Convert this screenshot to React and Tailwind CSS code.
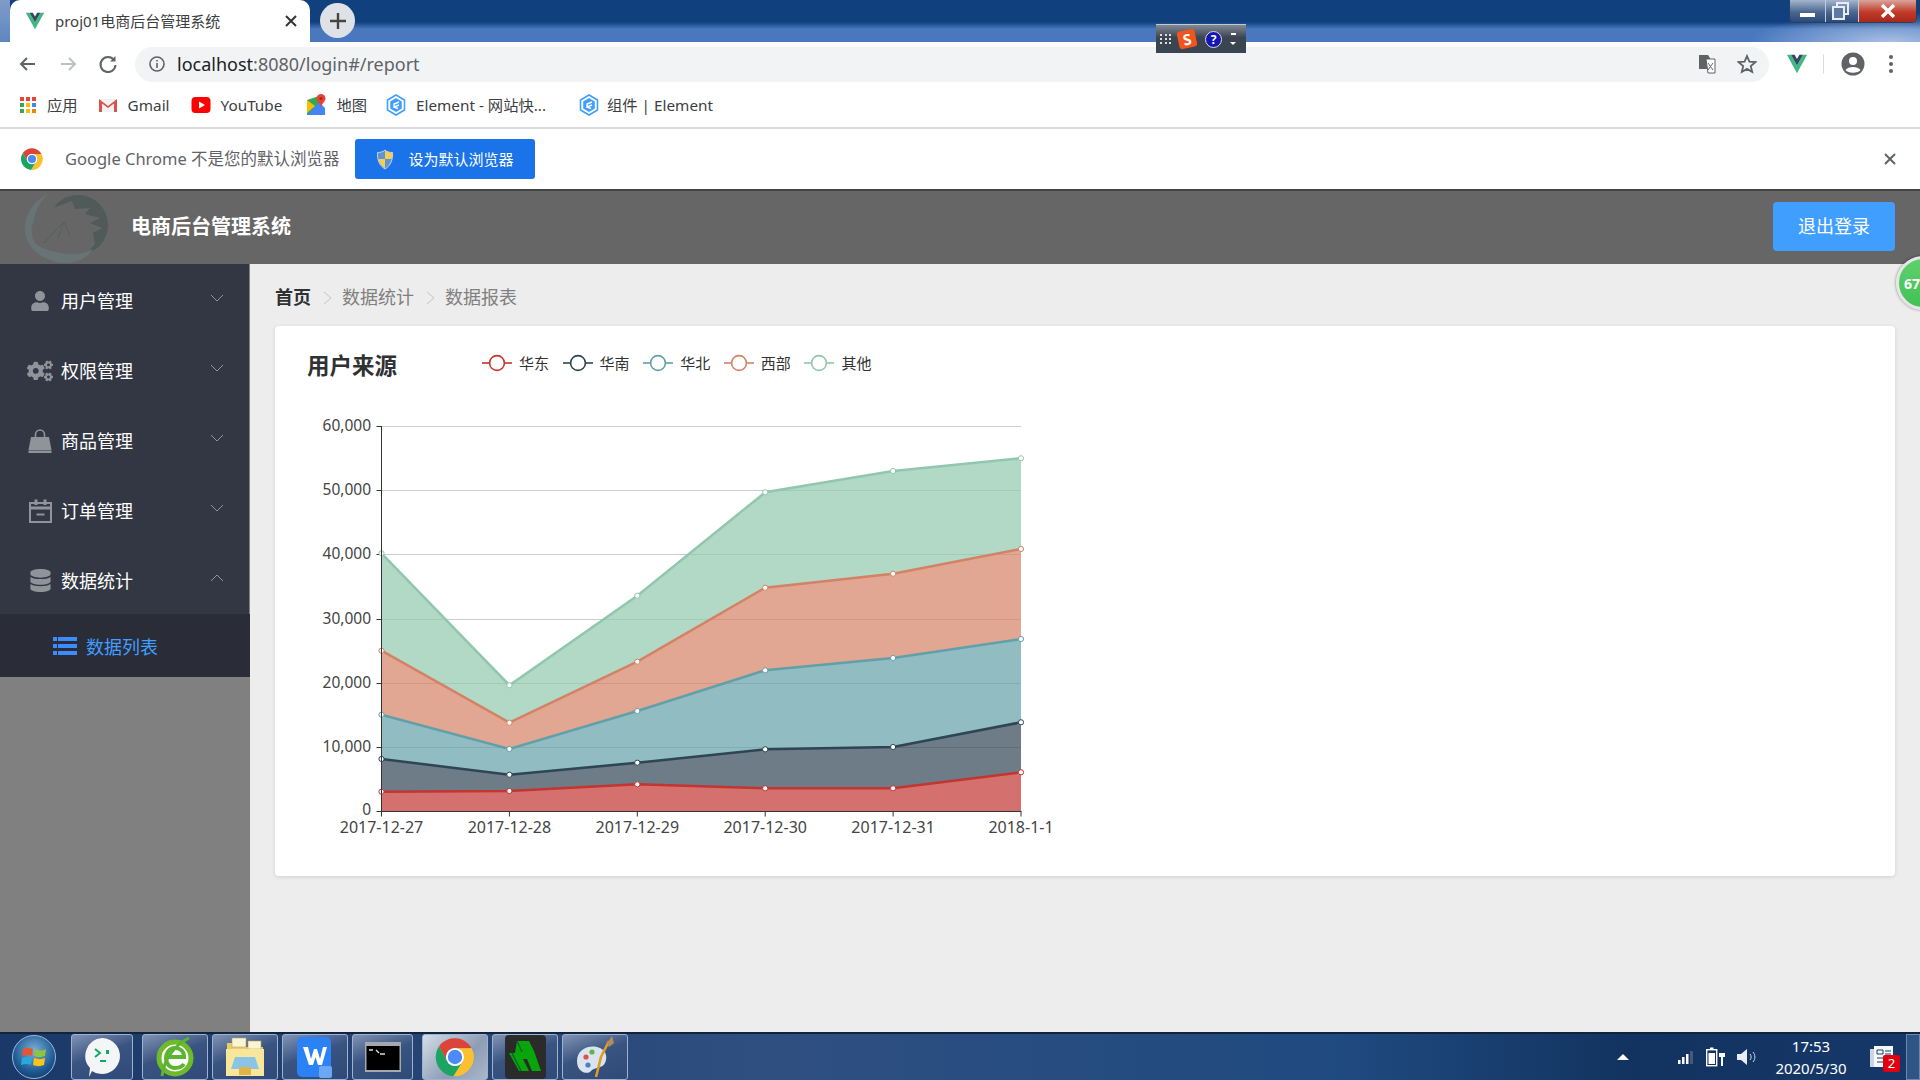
import React from "react";
import { FaCogs, FaDatabase, FaUser } from "react-icons/fa";

// chart data, read off as y pixels of the stacked lines
const columns = [0, 1, 2, 3, 4, 5].map((i) => 381.5 + i * 127.9);
const series = [
  { name: "华东", color: "#c23531", ys: [791.7, 791, 784.3, 788.3, 788.3, 772.3] },
  { name: "华南", color: "#2f4554", ys: [759, 774.7, 762.7, 749.3, 747, 722.3] },
  { name: "华北", color: "#61a0a8", ys: [714.7, 749, 711, 670.3, 658, 639] },
  { name: "西部", color: "#d48265", ys: [650.7, 722.7, 661.7, 587.7, 573.7, 549] },
  { name: "其他", color: "#91c7ae", ys: [553.3, 685.3, 595.7, 492.3, 471, 458.3] },
];
const baseY = 811.5;
const yTicks = [
  ["60,000", 426.5],
  ["50,000", 490.5],
  ["40,000", 554.5],
  ["30,000", 619.5],
  ["20,000", 683.5],
  ["10,000", 747.5],
  ["0", 811.5],
];
const xLabels = ["2017-12-27", "2017-12-28", "2017-12-29", "2017-12-30", "2017-12-31", "2018-1-1"];

const Chevron = ({ up }) => (
  <svg width="14" height="8" viewBox="0 0 14 8" fill="none" stroke="#909399" strokeWidth="1" className="ml-auto mr-[25px] -mt-[2px]">
    <path d={up ? "M1 7 L7 1 L13 7" : "M1 1 L7 7 L13 1"} />
  </svg>
);

const BagIcon = () => (
  <svg width="24" height="24" viewBox="0 0 24 24" fill="#909399">
    <path d="M3 8 H21 L23.5 21 H0.5 Z" />
    <rect x="0.5" y="21.5" width="23" height="2.5" />
    <path d="M7.5 10 V5.5 A4.5 4.5 0 0 1 16.5 5.5 V10" fill="none" stroke="#909399" strokeWidth="1.6" />
  </svg>
);

const CalendarIcon = () => (
  <svg width="23" height="24" viewBox="0 0 23 24" fill="none" stroke="#909399" strokeWidth="2">
    <rect x="1" y="4" width="21" height="19" />
    <path d="M1 9 H22" strokeWidth="3" />
    <path d="M7 0.5 V6 M16 0.5 V6" strokeWidth="3" />
    <path d="M7.5 15.5 H15.5" />
  </svg>
);

const ListIcon = () => (
  <svg width="24" height="18" viewBox="0 0 24 18" fill="#3c8cff">
    <rect x="0" y="0" width="4" height="4" />
    <rect x="5" y="0" width="19" height="4" />
    <rect x="0" y="7" width="4" height="4" />
    <rect x="5" y="7" width="19" height="4" />
    <rect x="0" y="14" width="4" height="4" />
    <rect x="5" y="14" width="19" height="4" />
  </svg>
);

const menus = [
  { label: "用户管理", icon: <FaUser size={20} /> },
  { label: "权限管理", icon: <FaCogs size={26} /> },
  { label: "商品管理", icon: <BagIcon /> },
  { label: "订单管理", icon: <CalendarIcon /> },
  { label: "数据统计", icon: <FaDatabase size={23} />, open: true },
];

const VueLogo = ({ size = 20 }) => (
  <svg width={size} height={size} viewBox="0 0 24 22">
    <path d="M1 1 L12 21 L23 1 H18.5 L12 12.5 L5.5 1 Z" fill="#41b883" />
    <path d="M5.5 1 L12 12.5 L18.5 1 H14.6 L12 5.6 L9.4 1 Z" fill="#35495e" />
  </svg>
);

const ChromeLogo = ({ size = 24 }) => (
  <svg width={size} height={size} viewBox="0 0 24 24">
    <path d="M12 7 H21.5 A11 11 0 0 0 2.8 6 L7.7 14.5 A5 5 0 0 1 12 7z" fill="#db4437" />
    <path d="M12 7 H21.5 A11 11 0 0 1 11 23 L16.3 14.5 A5 5 0 0 0 12 7z" fill="#fbc02d" />
    <path d="M2.8 6 A11 11 0 0 0 11 23 L16.3 14.5 A5 5 0 0 1 7.7 14.5z" fill="#1da462" />
    <circle cx="12" cy="12" r="5.2" fill="#fff" />
    <circle cx="12" cy="12" r="4.1" fill="#4c8bf5" />
  </svg>
);

const ElementIcon = () => (
  <svg width="20" height="22" viewBox="0 0 20 22">
    <path d="M10 1 L18.5 6 V16 L10 21 L1.5 16 V6 Z" fill="#fff" stroke="#409eff" strokeWidth="1.6" />
    <path d="M10 4 L15.8 7.4 V14.6 L10 18 L4.2 14.6 V7.4 Z" fill="#409eff" />
    <path d="M13 8 L8 10 V13 L13 11 M8 13 L12 14.5" stroke="#fff" strokeWidth="1.4" fill="none" />
  </svg>
);

const AppsIcon = () => (
  <svg width="16" height="16" viewBox="0 0 16 16">
    {[0, 1, 2].map((r) =>
      [0, 1, 2].map((c) => (
        <rect
          key={`${r}${c}`}
          x={c * 6}
          y={r * 6}
          width="4"
          height="4"
          fill={[["#ea4335", "#ea4335", "#ea4335"], ["#34a853", "#fbbc05", "#4285f4"], ["#34a853", "#fbbc05", "#ea8600"]][r][c]}
        />
      ))
    )}
  </svg>
);

const GmailIcon = () => (
  <svg width="20" height="16" viewBox="0 0 20 16">
    <path d="M1 2 H19 V15 H1 Z" fill="#f2f2f2" />
    <path d="M1 15 V2 L10 9 L19 2 V15 H16 V6.5 L10 11 L4 6.5 V15 Z" fill="#d9534a" />
  </svg>
);

const YoutubeIcon = () => (
  <svg width="20" height="18" viewBox="0 0 20 18">
    <rect x="0.5" y="1" width="19" height="16" rx="4" fill="#f00" />
    <path d="M8 5.5 L14 9 L8 12.5 Z" fill="#fff" />
  </svg>
);

const MapsIcon = () => (
  <svg width="20" height="24" viewBox="0 0 20 24">
    <path d="M1 7 L13 3 V22 L1 22 Z" fill="#34a853" />
    <path d="M1 22 L13 9 L19 15 V22 Z" fill="#4285f4" />
    <path d="M1 7 L9 13 L1 20 Z" fill="#fbbc05" />
    <path d="M15 1 A4.5 4.5 0 0 1 19.5 5.5 C19.5 8.5 16 10.5 15 14 C14 10.5 10.5 8.5 10.5 5.5 A4.5 4.5 0 0 1 15 1 Z" fill="#ea4335" />
    <circle cx="15" cy="5.5" r="1.6" fill="#a52714" />
  </svg>
);

const Bookmark = ({ icon, text, className = "" }) => (
  <div className={`flex items-center ${className}`}>
    {icon}
    <span className="text-[15.3px] text-[#3c4043] whitespace-nowrap">{text}</span>
  </div>
);

const ShieldIcon = () => (
  <svg width="18" height="21" viewBox="0 0 18 21">
    <path d="M9 1 C11 3 14 3.5 16.5 3.5 C17 10 15 16.5 9 20 C3 16.5 1 10 1.5 3.5 C4 3.5 7 3 9 1 Z" fill="#5f93d6" stroke="#dfe7f2" strokeWidth="0.8" />
    <path d="M9 1.6 C11 3.4 14 3.9 16.1 3.9 C16.3 6.4 16.1 8.3 15.7 10 H9 Z" fill="#f5cf4e" />
    <path d="M9 10 H2.3 C3.2 14 5.6 17.2 9 19.4 Z" fill="#f5cf4e" />
  </svg>
);

const Logo = () => (
  <svg width="84" height="74" viewBox="0 0 84 74">
    <circle cx="54" cy="35" r="30" fill="#505b59" />
    <path d="M13 51 L16 33 L26 19 L34 16 L48 11 L51 19 L66 18 L61 24 L76 28 L66 33 L78 38 L69 43 L71 54 L62 64 L40 68 L29 53 Z" fill="#666666" />
    <path d="M24 4 C10 10 1 24 1 39 C1 58 20 73 43 73 C54 73 64 67 69 59 C62 63 52 65 43 64 C26 62 13 56 11 53 C7 46 7 38 9 33 C11 22 16 11 24 4 Z" fill="#687376" />
    <path d="M20 53 L32 40 L40 32 L46 46 M40 32 L34 48" fill="none" stroke="#555f5e" strokeWidth="1" />
  </svg>
);

const TaskButton = ({ children, active, className = "" }) => (
  <div
    className={`h-[46px] rounded-[3px] border border-[#9fb3cf] flex items-center justify-center shrink-0 ${
      active
        ? "bg-[linear-gradient(135deg,#d5dde8,#8c9db5_60%,#aab7c9)]"
        : "bg-[linear-gradient(160deg,#7f93b3,#3a5482_45%,#2f4a78)]"
    } ${className}`}
  >
    {children}
  </div>
);

const WinOrb = () => (
  <div className="w-[44px] h-[44px] rounded-full border border-[#9db9d6] bg-[radial-gradient(circle_at_50%_35%,#7fb0d8,#1d5a93_60%,#0c2c55)] flex items-center justify-center">
    <svg width="26" height="24" viewBox="0 0 26 24">
      <path d="M2 4 C5 2.5 8 2.5 12 4 L11 11 C8 9.5 5 9.5 1 11 Z" fill="#e8552d" />
      <path d="M14 4.5 C17 6 21 6 25 4 L24 11 C20 12.5 17 12.5 13 11 Z" fill="#8cc63f" />
      <path d="M1 13 C5 11.5 8 11.5 11 13 L10 20 C7 18.5 4 18.5 0 20 Z" fill="#29a8e0" />
      <path d="M13 13 C17 14.5 20 14.5 24 13 L23 20 C19 21.5 16 21.5 12 20 Z" fill="#fcc419" />
    </svg>
  </div>
);

const taskIcons = {
  chat: (
    <svg width="40" height="44" viewBox="0 0 40 44">
      <path d="M20 3 A18 18 0 1 1 10 36 L7 42 L8 33 A18 18 0 0 1 20 3 Z" fill="#f4f5f6" />
      <path d="M13 14 L18 18 L13 22" stroke="#0fa968" strokeWidth="2" fill="none" />
      <rect x="24" y="15" width="3" height="4" fill="#0fa968" />
      <rect x="18" y="25" width="6" height="2" fill="#0fa968" />
    </svg>
  ),
  ie: (
    <svg width="38" height="42" viewBox="0 0 38 42">
      <circle cx="19" cy="22" r="16" fill="#fff" stroke="#6dbb2b" strokeWidth="5" />
      <path d="M10 21 H28 C28 15 24 12 19 12 C13 12 10 17 10 22 C10 28 14 32 19 32 C23 32 26 31 28 28" fill="none" stroke="#5cb531" strokeWidth="4" />
      <path d="M33 2 C20 8 8 22 6 40" fill="none" stroke="#5cb531" strokeWidth="3" />
    </svg>
  ),
  folder: (
    <svg width="42" height="44" viewBox="0 0 42 44">
      <path d="M3 8 H18 L21 12 H39 V40 H3 Z" fill="#e9cc6e" />
      <rect x="8" y="3" width="14" height="9" fill="#fbf4d0" stroke="#b9a35e" strokeWidth="0.6" />
      <rect x="24" y="6" width="13" height="8" fill="#fbf4d0" stroke="#b9a35e" strokeWidth="0.6" />
      <path d="M2 14 H40 V41 H2 Z" fill="#f8e69a" />
      <path d="M11 22 H31 L35 34 H7 Z" fill="#8ac4e8" />
      <rect x="15" y="32" width="12" height="8" fill="#e0b446" />
    </svg>
  ),
  wps: (
    <svg width="38" height="46" viewBox="0 0 38 46">
      <rect x="1" y="3" width="34" height="40" rx="5" fill="#2b82f4" />
      <path d="M7 13 H12 L15 25 L18 15 H21 L24 25 L27 13 H31 L26 31 H22 L19.5 23 L17 31 H13 Z" fill="#fff" />
      <rect x="23" y="32" width="13" height="12" rx="2" fill="#6ca7f5" />
    </svg>
  ),
  cmd: (
    <svg width="36" height="30" viewBox="0 0 36 30">
      <rect x="0" y="0" width="36" height="30" fill="#a5a9ad" />
      <rect x="1.5" y="4" width="33" height="24" fill="#000" />
      <path d="M4 8 H8 M11 8 L14 11 M15 12 H20" stroke="#ddd" strokeWidth="1.4" />
    </svg>
  ),
  film: (
    <svg width="41" height="44" viewBox="0 0 41 44">
      <rect x="0" y="0" width="41" height="44" rx="4" fill="#2b2b2b" />
      <path d="M12 6 H24 L29 16 L36 36 H27 L22 24 H18 L24 36 H14 L4 18 L10 18 Z" fill="#09a60b" />
      <path d="M7 18 L16 36 M12 6 L17 17" stroke="#063" strokeWidth="1.5" />
    </svg>
  ),
  paint: (
    <svg width="42" height="44" viewBox="0 0 42 44">
      <path d="M3 26 C3 14 15 10 23 12 C32 14 34 22 31 28 C28 34 20 32 17 36 C14 40 3 38 3 26 Z" fill="#d9e4ef" />
      <circle cx="12" cy="22" r="2.6" fill="#d9534a" />
      <circle cx="18" cy="17" r="2.6" fill="#6ab04c" />
      <circle cx="14" cy="30" r="2.6" fill="#4a7fc1" />
      <path d="M35 6 L27 22 L22 42" stroke="#e09a2b" strokeWidth="2.6" fill="none" />
      <path d="M33 8 L38 1 L40 8 L35 12 Z" fill="#b58c5a" />
    </svg>
  ),
};

export default function App() {
  return (
    <div className="relative w-[1920px] h-[1080px] overflow-hidden flex flex-col bg-white font-['Noto_Sans','Noto_Sans_CJK_SC',sans-serif]">
      {/* chrome tab strip */}
      <div className="relative h-[42px] shrink-0 flex items-end bg-[radial-gradient(ellipse_140px_30px_at_1890px_42px,rgba(200,215,240,0.75),transparent),linear-gradient(180deg,#11407f_0,#11407f_22px,#4878be_29px,#4a78bf_100%)]">
        <div className="absolute left-0 top-0 w-[10px] h-full bg-[linear-gradient(180deg,#7f9cc8,#5f86c2)]" />
        <div className="relative ml-[10px] w-[300px] h-[42px] bg-white rounded-t-[10px] flex items-center pl-[15px] pr-[13px]">
          <VueLogo size={20} />
          <span className="ml-[10px] text-[15px] text-[#3c4043] whitespace-nowrap">proj01电商后台管理系统</span>
          <svg width="12" height="12" viewBox="0 0 12 12" className="ml-auto" stroke="#333" strokeWidth="2">
            <path d="M1 1 L11 11 M11 1 L1 11" />
          </svg>
        </div>
        <div className="ml-[10px] mb-[4px] w-[35px] h-[35px] rounded-full bg-[#dee1e6] flex items-center justify-center">
          <svg width="16" height="16" viewBox="0 0 16 16" stroke="#444" strokeWidth="2.4">
            <path d="M8 0 V16 M0 8 H16" />
          </svg>
        </div>
        {/* window buttons */}
        <div className="absolute right-[3px] top-0 h-[23px] w-[128px] flex rounded-b-[5px] border border-t-0 border-[#2a3f60] overflow-hidden">
          <div className="w-[36px] flex items-end justify-center pb-[5px] bg-[linear-gradient(180deg,#a4b5ce,#4a678f_55%,#2a4a78)] border-r border-[#c3cfe0]">
            <div className="w-[15px] h-[4px] bg-white" />
          </div>
          <div className="w-[33px] flex items-center justify-center bg-[linear-gradient(180deg,#a4b5ce,#4a678f_55%,#2a4a78)] border-r border-[#c3cfe0]">
            <svg width="17" height="18" viewBox="0 0 17 18" fill="none" stroke="#e8edf4" strokeWidth="2" className="mr-[3px]">
              <path d="M5 4 V1 H16 V12 H12" />
              <rect x="1" y="5" width="11" height="12" fill="#5d7aa3" />
            </svg>
          </div>
          <div className="flex-1 flex items-center justify-center bg-[linear-gradient(180deg,#d9a49b,#c23a28_55%,#a8281a)]">
            <svg width="16" height="14" viewBox="0 0 16 14" stroke="#fff" strokeWidth="3.4">
              <path d="M2 1 L14 13 M14 1 L2 13" />
            </svg>
          </div>
        </div>
      </div>

      {/* address bar */}
      <div className="h-[42px] shrink-0 flex items-center bg-white pt-[2px]">
        <svg width="20" height="20" viewBox="0 0 20 20" fill="none" stroke="#5f6368" strokeWidth="2" className="ml-[18px]">
          <path d="M17 10 H3 M9 4 L3 10 L9 16" />
        </svg>
        <svg width="20" height="20" viewBox="0 0 20 20" fill="none" stroke="#bdc1c6" strokeWidth="2" className="ml-[20px]">
          <path d="M3 10 H17 M11 4 L17 10 L11 16" />
        </svg>
        <svg width="20" height="20" viewBox="0 0 20 20" fill="none" stroke="#5f6368" strokeWidth="2" className="ml-[20px]">
          <path d="M16 6 A7.5 7.5 0 1 0 17.5 11" />
          <path d="M17.5 2 V7.5 H12 Z" fill="#5f6368" stroke="none" />
        </svg>
        <div className="ml-[17px] w-[1634px] h-[35px] rounded-full bg-[#f1f3f4] flex items-center pl-[14px] pr-[12px]">
          <svg width="16" height="16" viewBox="0 0 16 16" fill="none" stroke="#5f6368" strokeWidth="1.6">
            <circle cx="8" cy="8" r="7" />
            <path d="M8 7 V12 M8 4 V5.6" />
          </svg>
          <span className="ml-[12px] text-[18px] text-[#202124]">
            localhost<span className="text-[#5f6368]">:8080/login#/report</span>
          </span>
          <svg width="18" height="20" viewBox="0 0 18 20" className="ml-auto">
            <path d="M1 1 H10 L12 4 V15 H1 Z" fill="#5f6368" />
            <path d="M8 5 H17 V19 H10 Z" fill="#fff" stroke="#5f6368" />
            <path d="M10 9 L15 16 M15 9 L10 16" stroke="#5f6368" />
          </svg>
          <svg width="20" height="20" viewBox="0 0 20 20" fill="none" stroke="#5f6368" strokeWidth="1.8" className="ml-[21px]">
            <path d="M10 2 L12.4 7.6 L18.4 8.1 L13.8 12.1 L15.2 18 L10 14.9 L4.8 18 L6.2 12.1 L1.6 8.1 L7.6 7.6 Z" />
          </svg>
        </div>
        <div className="ml-[17px]">
          <VueLogo size={22} />
        </div>
        <div className="ml-[15px] w-px h-[20px] bg-[#dadce0]" />
        <svg width="24" height="24" viewBox="0 0 24 24" className="ml-[17px]">
          <circle cx="12" cy="12" r="11.5" fill="#5f6368" />
          <circle cx="12" cy="9" r="4" fill="#fff" />
          <path d="M4.5 18 C7 14 17 14 19.5 18 C17 21.5 7 21.5 4.5 18 Z" fill="#fff" />
        </svg>
        <div className="ml-[24px] flex flex-col gap-[3px]">
          <div className="w-[4px] h-[4px] rounded-full bg-[#5f6368]" />
          <div className="w-[4px] h-[4px] rounded-full bg-[#5f6368]" />
          <div className="w-[4px] h-[4px] rounded-full bg-[#5f6368]" />
        </div>
      </div>

      {/* bookmarks */}
      <div className="h-[45px] shrink-0 flex items-center bg-white border-b-2 border-[#dadce0] pl-[20px] pb-[1px]">
        <Bookmark icon={<AppsIcon />} text="应用" className="gap-[11px]" />
        <Bookmark icon={<GmailIcon />} text="Gmail" className="gap-[10px] ml-[20px]" />
        <Bookmark icon={<YoutubeIcon />} text="YouTube" className="gap-[10px] ml-[21px]" />
        <Bookmark icon={<MapsIcon />} text="地图" className="gap-[10px] ml-[24px]" />
        <Bookmark icon={<ElementIcon />} text="Element - 网站快..." className="gap-[10px] ml-[19px]" />
        <Bookmark icon={<ElementIcon />} text="组件 | Element" className="gap-[8px] ml-[33px]" />
      </div>

      {/* default browser bar */}
      <div className="h-[60px] shrink-0 flex items-center bg-white pl-[20px] pr-[24px]">
        <ChromeLogo size={24} />
        <span className="ml-[21px] text-[16.5px] text-[#5f6368] whitespace-nowrap">Google Chrome 不是您的默认浏览器</span>
        <div className="ml-[15px] w-[180px] h-[40px] rounded-[3px] bg-[#1a73e8] flex items-center pl-[21px]">
          <ShieldIcon />
          <span className="ml-[15px] text-[15px] text-white">设为默认浏览器</span>
        </div>
        <svg width="12" height="12" viewBox="0 0 12 12" stroke="#5f6368" strokeWidth="2" className="ml-auto">
          <path d="M1 1 L11 11 M11 1 L1 11" />
        </svg>
      </div>

      {/* app header */}
      <div className="h-[75px] shrink-0 flex items-center bg-[#666666] shadow-[inset_0_2px_0_#444] pl-[24px] pr-[25px]">
        <Logo />
        <span className="ml-[23px] text-[20px] font-bold text-white">电商后台管理系统</span>
        <button className="ml-auto w-[122px] h-[49px] rounded-[4px] bg-[#409eff] text-[18px] text-white">退出登录</button>
      </div>

      <div className="flex-1 flex min-h-0">
        {/* sidebar */}
        <div className="w-[250px] shrink-0 bg-[#808080] flex flex-col">
          {menus.map((m) => (
            <div key={m.label} className="h-[70px] flex items-center bg-[#333744] w-[249px]">
              <div className="w-[26px] ml-[27px] flex justify-center text-[#909399] pt-[3px]">{m.icon}</div>
              <span className="ml-[8px] text-[18px] text-white pt-[4px]">{m.label}</span>
              <Chevron up={m.open} />
            </div>
          ))}
          <div className="h-[63px] flex items-center bg-[#2a2c38] pl-[53px]">
            <ListIcon />
            <span className="ml-[9px] text-[18px] text-[#409eff] pt-[3px]">数据列表</span>
          </div>
        </div>

        {/* main */}
        <div className="flex-1 bg-[#ededed] pl-[25px] pr-[25px]">
          <div className="h-[62px] flex items-center text-[18px] text-[#808080] pt-[5px]">
            <span className="font-bold text-[#303133]">首页</span>
            <svg width="9" height="14" viewBox="0 0 9 14" fill="none" stroke="#c0c4cc" className="ml-[12px] mr-[10px]">
              <path d="M1 1 L8 7 L1 13" />
            </svg>
            <span>数据统计</span>
            <svg width="9" height="14" viewBox="0 0 9 14" fill="none" stroke="#c0c4cc" className="ml-[12px] mr-[10px]">
              <path d="M1 1 L8 7 L1 13" />
            </svg>
            <span>数据报表</span>
          </div>
          <div className="h-[550px] bg-white rounded-[4px] shadow-[0_1px_4px_rgba(0,0,0,0.12)] pt-[24px] pl-[33px]">
            <div className="h-[34px] flex items-center">
              <span className="w-[90px] -ml-px -mt-[3px] text-[22.5px] font-bold text-[#303133] whitespace-nowrap">用户来源</span>
              <div className="ml-[85px] mb-[8px] flex items-center">
                {series.map((s) => (
                  <div key={s.name} className="w-[80.6px] flex items-center">
                    <svg width="30" height="20" viewBox="0 0 30 20" fill="none" stroke={s.color} strokeWidth="1.6">
                      <path d="M0 10 H30" />
                      <circle cx="15" cy="10" r="7.4" fill="#fff" />
                    </svg>
                    <span className="ml-[7px] text-[15px] text-[#333]">{s.name}</span>
                  </div>
                ))}
              </div>
            </div>
            <svg width="744" height="470" viewBox="308 384 744 470" className="block">
              {yTicks.map(([label, y]) => (
                <g key={label}>
                  {label !== "0" && <line x1="381.5" x2="1021" y1={y} y2={y} stroke="#ccc" />}
                  <line x1="376.5" x2="381.5" y1={y} y2={y} stroke="#333" />
                  <text x="371" y={label === "0" ? y + 3 : y + 4} textAnchor="end" fontSize="15.5" fill="#444">
                    {label}
                  </text>
                </g>
              ))}
              {series.map((s, i) => {
                const below = i === 0 ? columns.map(() => baseY) : series[i - 1].ys;
                const top = columns.map((x, c) => `${x},${s.ys[c]}`).join(" ");
                const bottom = columns.map((x, c) => `${x},${below[c]}`).reverse().join(" ");
                return <polygon key={s.name} points={`${top} ${bottom}`} fill={s.color} fillOpacity="0.7" />;
              })}
              {series.map((s) => (
                <g key={s.name}>
                  <polyline points={columns.map((x, c) => `${x},${s.ys[c]}`).join(" ")} fill="none" stroke={s.color} strokeWidth="2.5" />
                  {columns.map((x, c) => (
                    <circle key={c} cx={x} cy={s.ys[c]} r="2.6" fill="#fff" stroke={s.color} />
                  ))}
                </g>
              ))}
              <line x1="381.5" x2="381.5" y1="426" y2={baseY} stroke="#333" />
              <line x1="381.5" x2="1021.5" y1={baseY} y2={baseY} stroke="#333" />
              {columns.map((x, i) => (
                <g key={x}>
                  <line x1={x} x2={x} y1={baseY} y2={baseY + 5} stroke="#333" />
                  <text x={x} y={baseY + 21} textAnchor="middle" fontSize="16" fill="#444">
                    {xLabels[i]}
                  </text>
                </g>
              ))}
            </svg>
          </div>
        </div>
      </div>

      {/* windows taskbar */}
      <div className="h-[48px] shrink-0 flex items-center border-t-2 border-[#10233f] bg-[linear-gradient(90deg,#1a3868_0,#2f4f80_40%,#1f4a80_70%,#12335f_85%,#16386a_100%)]">
        <div className="w-[67px] mr-[4px] shrink-0 flex justify-center">
          <WinOrb />
        </div>
        <TaskButton className="w-[62px]">{taskIcons.chat}</TaskButton>
        <TaskButton className="w-[66px] ml-[9px]">{taskIcons.ie}</TaskButton>
        <TaskButton className="w-[66px] ml-[4px]">{taskIcons.folder}</TaskButton>
        <TaskButton className="w-[66px] ml-[4px]">{taskIcons.wps}</TaskButton>
        <TaskButton className="w-[61px] ml-[4px]">{taskIcons.cmd}</TaskButton>
        <TaskButton active className="w-[66px] ml-[9px]">
          <ChromeLogo size={42} />
        </TaskButton>
        <TaskButton className="w-[66px] ml-[4px]">{taskIcons.film}</TaskButton>
        <TaskButton className="w-[66px] ml-[4px]">{taskIcons.paint}</TaskButton>

        {/* tray */}
        <svg width="12" height="6" viewBox="0 0 12 6" className="ml-[989px]">
          <path d="M0 6 L6 0 L12 6 Z" fill="#fff" />
        </svg>
        <svg width="16" height="14" viewBox="0 0 16 14" className="ml-[49px]">
          <rect x="0" y="10" width="2.5" height="4" fill="#fff" />
          <rect x="4" y="7" width="2.5" height="7" fill="#fff" />
          <rect x="8" y="4" width="2.5" height="10" fill="#fff" />
          <rect x="12" y="1" width="3" height="13" fill="#45597a" />
        </svg>
        <svg width="20" height="20" viewBox="0 0 20 20" className="ml-[12px]">
          <rect x="0.7" y="2.7" width="10" height="16" fill="none" stroke="#fff" strokeWidth="1.4" />
          <rect x="2.5" y="6" width="6.5" height="11" fill="#fff" />
          <rect x="4" y="0.5" width="3.5" height="2" fill="#fff" />
          <path d="M13 6 H19 V10 H17 V19 H15 V10 H13 Z" fill="#fff" />
        </svg>
        <svg width="20" height="18" viewBox="0 0 20 18" className="ml-[11px]">
          <path d="M0 6 H4 L10 1 V17 L4 12 H0 Z" fill="#e8edf3" />
          <path d="M13 6 C14.5 8 14.5 10 13 12 M16 4 C18.5 7 18.5 11 16 14" fill="none" stroke="#cfd8e3" />
        </svg>
        <div className="ml-[16px] w-[76px] shrink-0 flex flex-col items-center text-[15px] leading-[22px] text-white whitespace-nowrap">
          <span>17:53</span>
          <span>2020/5/30</span>
        </div>
        <div className="relative ml-[21px] w-[24px] h-[24px] shrink-0">
          <svg width="24" height="24" viewBox="0 0 24 24">
            <rect x="0" y="4" width="6" height="18" fill="#cdd5df" />
            <rect x="4" y="1" width="19" height="21" fill="#f5f7fa" />
            <path d="M7 5 H13 V9 H7 Z M15 6 H21 M15 9 H21 M7 13 H21 M7 17 H21" stroke="#1d4068" fill="none" />
          </svg>
          <div className="absolute left-[13px] top-[10px] w-[17px] h-[17px] rounded-[2px] bg-[#e0000f] text-[13px] leading-[17px] text-center text-white">2</div>
        </div>
        <div className="ml-auto w-[14px] h-full border border-[#6f87a8] bg-[#2f5486]" />
      </div>

      {/* overlays: sogou toolbar and the floating badge */}
      <div className="absolute left-[1156px] top-[24px] w-[90px] h-[29px] flex items-center bg-[linear-gradient(180deg,#808a96,#3b4450_45%,#3a4552)] border-t border-white/70">
        <div className="ml-[4px] grid grid-cols-3 gap-[2px] w-[12px]">
          {[...Array(9)].map((_, i) => (
            <div key={i} className="w-[2px] h-[2px] bg-[#ddd]" />
          ))}
        </div>
        <div className="ml-[6px] w-[18px] h-[18px] rounded-[3px] bg-[#f0551e] text-[15px] leading-[18px] text-center font-bold text-white -rotate-12">S</div>
        <div className="ml-[9px] w-[17px] h-[17px] rounded-full bg-[#1515b5] border border-[#ddd] text-[12px] leading-[15px] text-center font-bold text-white">?</div>
        <div className="ml-[8px] flex flex-col items-center gap-[7px]">
          <div className="w-[5px] h-[2px] bg-white" />
          <div className="w-0 h-0 border-x-[3px] border-t-[3px] border-x-transparent border-t-white" />
        </div>
      </div>
      <div className="absolute left-[1896px] top-[256px] w-[54px] h-[54px] rounded-full bg-[linear-gradient(180deg,#5fd06d,#3fc255)] border-[3px] border-[#e6e6e6] shadow-[0_0_3px_rgba(0,0,0,0.5)] flex items-center pl-[5px] text-[14px] font-bold text-white">
        67
      </div>
    </div>
  );
}
